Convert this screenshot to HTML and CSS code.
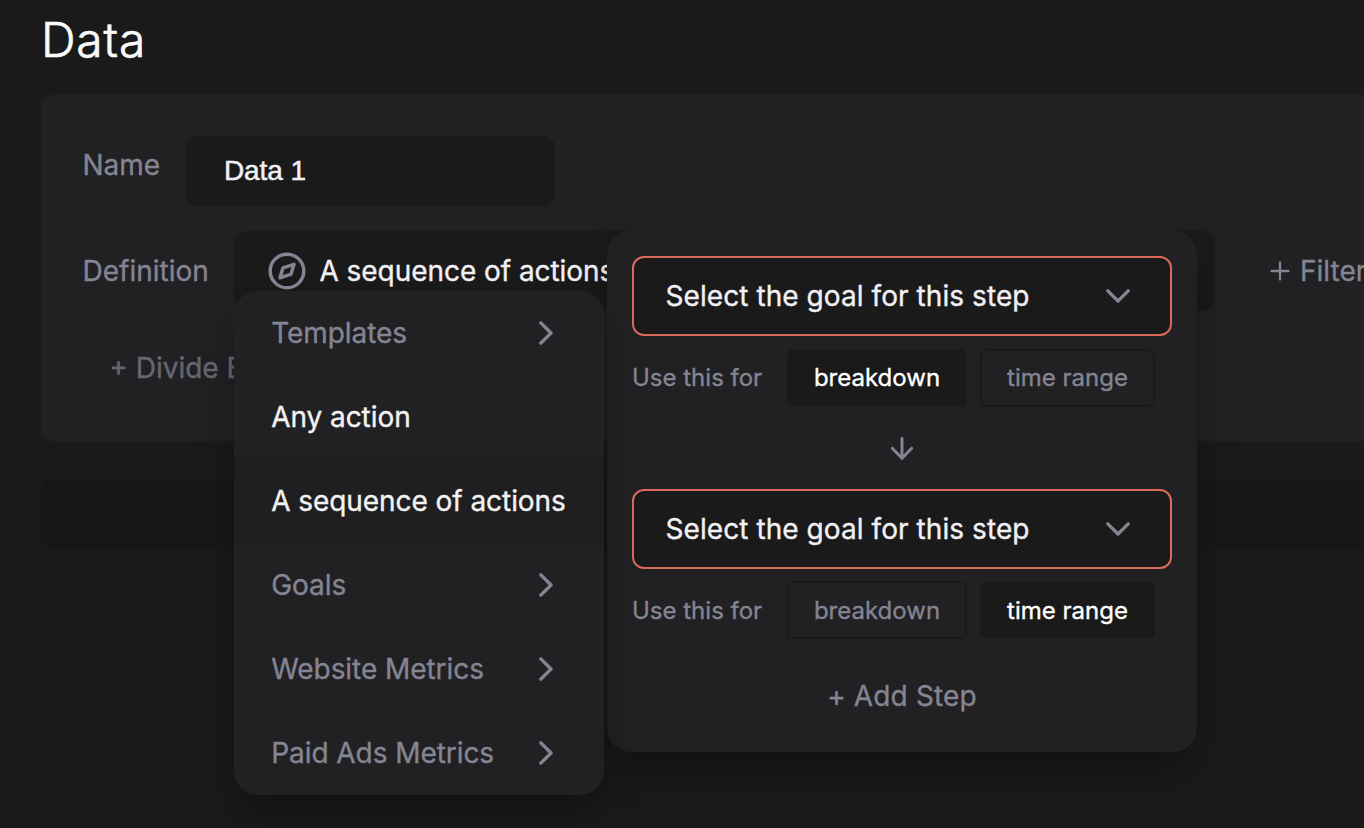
FILE: index.html
```html
<!DOCTYPE html>
<html lang="en">
<head>
<meta charset="utf-8">
<title>Data</title>
<link rel="stylesheet" href="styles.css">
</head>
<body>
<main class="page">
  <h1 class="title">Data</h1>
  <section class="card">
    <div class="row name-row">
      <label class="label name-label" for="name">Name</label>
      <input class="name-input" id="name" type="text" value="Data 1">
    </div>
    <div class="row definition-row">
      <span class="label definition-label">Definition</span>
      <div class="select">
        <svg class="compass" viewBox="0 0 38 38"><circle cx="19" cy="19" r="16.8"/><path class="needle" d="M26 12.3 23 22.2 12 25.8 15 15.8Z"/></svg>
        <span class="select-value">A sequence of actions</span>

        <div class="steps">
          <div class="goal"><span>Select the goal for this step</span><svg class="chevron-down" viewBox="0 0 24 14"><path d="M1.8 1.8 12 12 22.2 1.8"/></svg></div>
          <div class="usage">
            <span class="usage-label">Use this for</span>
            <button class="pill breakdown active">breakdown</button>
            <button class="pill range">time range</button>
          </div>
          <svg class="arrow" viewBox="0 0 24 24"><path d="M12 1.5V21.5M2.3 11.2 12 21.2 21.7 11.2"/></svg>
          <div class="goal"><span>Select the goal for this step</span><svg class="chevron-down" viewBox="0 0 24 14"><path d="M1.8 1.8 12 12 22.2 1.8"/></svg></div>
          <div class="usage second">
            <span class="usage-label">Use this for</span>
            <button class="pill breakdown">breakdown</button>
            <button class="pill range active">time range</button>
          </div>
          <div class="add-step">+ Add Step</div>
        </div>

        <ul class="menu">
          <li class="item">Templates<svg class="chevron" viewBox="0 0 14 24"><path d="M1.8 1.8 12 12 1.8 22.2"/></svg></li>
          <li class="item bright">Any action</li>
          <li class="item bright selected">A sequence of actions</li>
          <li class="item">Goals<svg class="chevron" viewBox="0 0 14 24"><path d="M1.8 1.8 12 12 1.8 22.2"/></svg></li>
          <li class="item">Website Metrics<svg class="chevron" viewBox="0 0 14 24"><path d="M1.8 1.8 12 12 1.8 22.2"/></svg></li>
          <li class="item">Paid Ads Metrics<svg class="chevron" viewBox="0 0 14 24"><path d="M1.8 1.8 12 12 1.8 22.2"/></svg></li>
        </ul>
      </div>
      <div class="filter"><svg class="plus" viewBox="0 0 20 20"><path d="M10 1.5V18.5M1.5 10H18.5"/></svg><span>Filter</span></div>
    </div>
    <div class="divide">+ Divide By</div>
  </section>
  <div class="bar"></div>
</main>
</body>
</html>
```
FILE: styles.css
```css
* { box-sizing: border-box; }

body {
  margin: 0;
  height: 828px;
  overflow: hidden;
  background: #1a1a1a;
  color: #858493;
  font: 28px/34px Inter, "Liberation Sans", sans-serif;
  -webkit-text-stroke: 0.35px currentColor;
}

svg {
  display: block;
  flex: none;
  fill: none;
  stroke: #858493;
  stroke-width: 3.3;
  stroke-linecap: round;
  stroke-linejoin: round;
}

.page { height: 828px; padding-left: 41px; overflow: hidden; }

.title {
  margin: 0;
  height: 95px;
  padding-top: 10px;
  color: #f9fafa;
  font-size: 48px;
  font-weight: 300;
  line-height: 60px;
  letter-spacing: 0.8px;
  -webkit-text-stroke-width: 0.7px;
}

.card {
  height: 346px;
  padding: 41px 0 0 41px;
  border-radius: 10px 0 0 10px;
  background: #212123;
}

.row { display: flex; white-space: nowrap; }
.name-row { height: 95px; }
.label { flex: none; }
.name-label { width: 103px; padding: 12px 0 0 0.5px; }
.definition-label { width: 152px; padding: 23px 0 0 0.5px; }

.name-input {
  width: 370px;
  height: 70px;
  padding: 0 39px;
  border: 0;
  border-radius: 12px;
  outline: 0;
  background: #1a1a1a;
  color: #f2f0f5;
  font: 28px "Liberation Sans", sans-serif;
  letter-spacing: -0.1px;
  -webkit-text-stroke: 0.5px currentColor;
}

.select {
  position: relative;
  display: flex;
  flex: none;
  align-items: center;
  width: 980px;
  height: 80px;
  padding-left: 34px;
  border-radius: 12px;
  background: #1a1a1a;
  color: #f2f0f5;
}

.compass { width: 38px; height: 38px; margin-right: 13.5px; stroke-width: 3.5; }
.select-value { letter-spacing: -0.05px; }

.steps {
  position: absolute;
  z-index: 1;
  top: 0;
  left: 373px;
  width: 590px;
  height: 521px;
  padding: 25px;
  border-radius: 24px;
  background: #212123;
  box-shadow: 0 24px 40px -6px rgba(0, 0, 0, 0.34);
}

.goal {
  display: flex;
  align-items: center;
  justify-content: space-between;
  height: 80px;
  padding: 0 40px 0 31.5px;
  border: 2px solid #d96a5b;
  border-radius: 12px;
  background: #1a1a1a;
  letter-spacing: 0.07px;
}

.chevron-down { width: 24px; height: 14px; }

.usage {
  display: flex;
  align-items: center;
  margin-top: 13px;
  height: 58px;
  font-size: 24px;
  color: #858493;
}

.usage-label { width: 155px; }

.pill {
  height: 58px;
  padding: 0;
  border: 2px solid #1b1b1c;
  border-radius: 6px;
  background: transparent;
  color: #858493;
  font: inherit;
}

.second { margin-top: 12px; }
.second .usage-label,
.second .pill { padding-top: 2px; }

.breakdown { width: 180px; margin-right: 13px; }
.range { width: 175px; }
.pill.active { background: #1a1a1a; color: #fff; }
.arrow { width: 24px; height: 24px; margin: 30px auto 28px; stroke-width: 2.9; }
.add-step { margin-top: 40px; text-align: center; color: #858493; letter-spacing: 0.15px; }

.menu {
  position: absolute;
  z-index: 2;
  top: 60px;
  left: 0;
  width: 370px;
  margin: 0;
  padding: 0;
  overflow: hidden;
  border-radius: 24px;
  background: #212123;
  box-shadow: 0 24px 40px -6px rgba(0, 0, 0, 0.34);
  color: #858493;
  letter-spacing: -0.06px;
  list-style: none;
}

.item {
  display: flex;
  align-items: center;
  justify-content: space-between;
  height: 84px;
  padding: 0 51px 0 37.2px;
  white-space: nowrap;
}

.bright { color: #f2f2f2; }
.selected { background: #1f1f21; }
.chevron { width: 14px; height: 24px; }

.filter { display: flex; align-items: center; height: 80px; margin-left: 56px; }
.plus { width: 20px; height: 20px; margin-right: 10px; stroke-width: 2.3; }
.divide { margin: 40px 0 0 27.3px; opacity: 0.7; }

.bar {
  height: 71px;
  margin-top: 38px;
  border-radius: 12px 0 0 12px;
  background: #171717;
}
```
